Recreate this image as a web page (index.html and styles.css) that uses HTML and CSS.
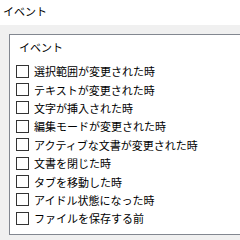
FILE: index.html
```html
<!DOCTYPE html>
<html lang="ja">
<head>
<meta charset="utf-8">
<link rel="stylesheet" href="styles.css">
</head>
<body>
<div class="page">
  <div class="header">イベント</div>
  <div class="panel">
    <div class="group">
      <div class="legend">イベント</div>
      <ul class="list">
        <li class="item"><span class="box"></span><span class="label">選択範囲が変更された時</span></li>
        <li class="item"><span class="box"></span><span class="label">テキストが変更された時</span></li>
        <li class="item"><span class="box"></span><span class="label">文字が挿入された時</span></li>
        <li class="item"><span class="box"></span><span class="label">編集モードが変更された時</span></li>
        <li class="item"><span class="box"></span><span class="label">アクティブな文書が変更された時</span></li>
        <li class="item"><span class="box"></span><span class="label">文書を閉じた時</span></li>
        <li class="item"><span class="box"></span><span class="label">タブを移動した時</span></li>
        <li class="item"><span class="box"></span><span class="label">アイドル状態になった時</span></li>
        <li class="item"><span class="box"></span><span class="label">ファイルを保存する前</span></li>
      </ul>
    </div>
  </div>
</div>
</body>
</html>
```
FILE: styles.css
```css
html, body {
  margin: 0;
  padding: 0;
  width: 240px;
  height: 240px;
  overflow: hidden;
  background: #f0f0f0;
}
.page {
  width: 240px;
  height: 240px;
  display: flex;
  flex-direction: column;
  font-family: "Noto Sans CJK JP", "Noto Sans", sans-serif;
  font-size: 11px;
  color: #000;
}
.header {
  height: 25px;
  background: #fff;
  padding-left: 3px;
  line-height: 23px;
  box-sizing: border-box;
}
.panel {
  flex: 1;
  padding: 9px 0 5px 9px;
  overflow: hidden;
}
.group {
  height: 201px;
  width: 260px;
  box-sizing: border-box;
  background: #fff;
  border: 1px solid #828790;
  padding: 4px 0 0 6px;
}
.legend {
  height: 16px;
  line-height: 16px;
  padding-left: 3px;
}
.list {
  list-style: none;
  margin: 0;
  padding: 7px 0 0 0;
}
.item {
  display: flex;
  align-items: center;
  height: 18.4px;
  gap: 5px;
}
.box {
  width: 11px;
  height: 11px;
  border: 1px solid #333;
  background: #fff;
  flex: none;
}
.label {
  line-height: 16px;
  white-space: nowrap;
}
```
